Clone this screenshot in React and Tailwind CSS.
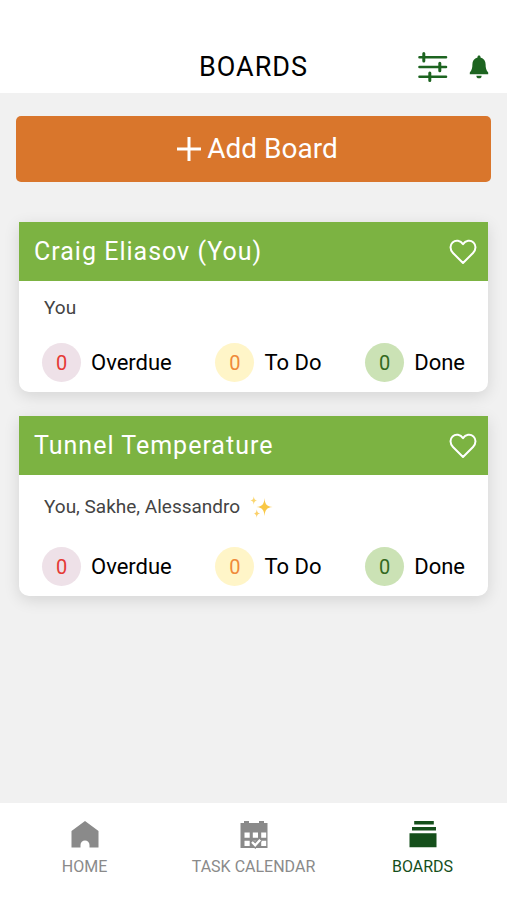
import React, {useState} from "react";

const boards = [
    {id: 1, name: "Craig Eliasov (You)", members: "You", starred: false, overdue: 0, todo: 0, done: 0},
    {id: 2, name: "Tunnel Temperature", members: "You, Sakhe, Alessandro", starred: true, overdue: 0, todo: 0, done: 0},
];

function FilterIcon() {
    return (
        <svg width="30" height="30" viewBox="0 0 30 30" fill="none" stroke="#1d6420" strokeWidth="2.6" strokeLinecap="round" aria-hidden="true">
            <path d="M1.500 5.200h26.500M1.500 15h26.500M1.500 24.800h26.500"/>
            <path d="M5.800 1.500v7.400M21.800 11.300v7.400M11.800 21.100v7.400" strokeWidth="3"/>
        </svg>
    );
}

function BellIcon() {
    return (
        <svg width="20" height="24" viewBox="0 0 20 24" fill="#1d6420" aria-hidden="true">
            <path d="M10 .5c1 0 1.500.7 1.500 1.600v.3c3.400.8 5.100 3.600 5.100 6.800 0 3.600.5 5.800 2.600 8.300v1.800H.8v-1.800c2.100-2.500 2.600-4.700 2.600-8.300 0-3.200 1.700-6 5.100-6.800v-.3C8.500 1.200 9 .5 10 .5z"/>
            <path d="M7.400 20.700h5.200a2.600 2.600 0 0 1-5.200 0z"/>
        </svg>
    );
}

function PlusIcon() {
    return (
        <svg width="24" height="24" viewBox="0 0 24 24" fill="none" stroke="currentColor" strokeWidth="3" aria-hidden="true">
            <path d="M12 0v24M0 12h24"/>
        </svg>
    );
}

function HeartIcon() {
    return (
        <svg width="28" height="26" viewBox="0 0 28 26" fill="none" stroke="currentColor" strokeWidth="2" strokeLinejoin="round" aria-hidden="true">
            <path d="M14 24 4 14C.6 10.500.9 6 3.600 3.400c3-2.700 7.900-2 10.400 1.700 2.500-3.700 7.400-4.400 10.400-1.700 2.700 2.600 3 7.100-.4 10.600z"/>
        </svg>
    );
}

function SparklesIcon() {
    return (
        <svg className="h-[34px] w-[23px]" viewBox="0 0 23 23" role="img" aria-label="Sparkles">
            <path fill="#f9c846" d="M14.500 2.500c.5 6.300 2.200 8.400 8.200 9-6 .6-7.700 2.700-8.200 9-.5-6.300-2.200-8.400-8.200-9 6-.6 7.700-2.700 8.200-9z"/>
            <path fill="#fbd66e" d="M3.800.8c.4 3 1 3.700 3.400 4.200-2.400.5-3 1.200-3.400 4.200C3.400 6.200 2.800 5.500.4 5c2.400-.5 3-1.200 3.400-4.200z"/>
            <path fill="#fbd06a" d="M6.800 13.800c.4 3 .9 3.800 3.300 4.300-2.400.5-2.900 1.300-3.300 4.300-.4-3-.9-3.800-3.300-4.300 2.400-.5 2.900-1.300 3.300-4.300z"/>
        </svg>
    );
}

function HomeIcon() {
    return (
        <svg width="28" height="28" viewBox="0 0 28 28" fill="currentColor" aria-hidden="true">
            <path d="M14 0 27.500 10V26.500H18.500v-2.500a4.500 4.500 0 0 0-9 0v2.500H.5V10z"/>
        </svg>
    );
}

function CalendarIcon() {
    return (
        <svg width="28" height="28" viewBox="0 0 28 28" aria-hidden="true">
            <path fill="currentColor" d="M.5 2H4V0h5v2h10V0h5v2h3.500v25H.5z"/>
            <path fill="#fff" d="M4.500 11.500h5.200v5.200H4.500zM12.800 11.500H18v5.200h-5.200zM21.200 11.500h5v5.200h-5zM4.500 19.700h5.200v5.200H4.500zM21.200 19.700h5v5.200h-5zM12.800 19.700H18v5.200h-5.200z"/>
            <path fill="none" stroke="currentColor" strokeWidth="5" d="m12 21 3.200 3.200 4.800-5.700"/>
            <path fill="none" stroke="#fff" strokeWidth="2.400" d="m12 21 3.200 3.200 5-5.400"/>
        </svg>
    );
}

function BoardsIcon() {
    return (
        <svg width="28" height="28" viewBox="0 0 28 28" fill="currentColor" aria-hidden="true">
            <path d="M5.200 0h19.600v3.500H5.200zM3 6h24v3.500H3zM.5 12.300h27v14H.5z"/>
        </svg>
    );
}

function Stat({count, label, badgeClass}) {
    return (
        <li className="flex items-center gap-[10px]">
            <span className={`flex size-[39px] items-center justify-center rounded-full text-[20px] ${badgeClass}`}>
                {count}
            </span>
            <span className="text-[22px] leading-7 text-black">{label}</span>
        </li>
    );
}

function BoardCard({board}) {
    const [liked, setLiked] = useState(false);

    return (
        <article className="rounded-b-[10px] bg-white shadow-[0_4px_16px_rgba(0,0,0,0.12)]">
            {/* Card header */}
            <div className="flex h-[59px] items-center justify-between bg-[#7cb342] pr-[11px] pl-[15px] text-white">
                <h2 className="text-[25px] leading-8 tracking-[1px]">{board.name}</h2>
                <button
                    type="button"
                    aria-label="Favourite"
                    aria-pressed={liked}
                    onClick={() => setLiked(!liked)}
                >
                    <HeartIcon/>
                </button>
            </div>
            <div className="px-[23px] pt-[15px] pb-[10px]">
                <p className="mb-[23px] flex min-h-6 items-center gap-[10px] pl-[2px] text-[19px] leading-6 text-[#444]">
                    {board.members}
                    {board.starred && <SparklesIcon/>}
                </p>
                <ul className="flex justify-between">
                    <Stat count={board.overdue} label="Overdue" badgeClass="bg-[#eee1e8] text-[#e53935]"/>
                    <Stat count={board.todo} label="To Do" badgeClass="bg-[#fff5c8] text-[#ef8a3a]"/>
                    <Stat count={board.done} label="Done" badgeClass="bg-[#cbe2b5] text-[#33691e]"/>
                </ul>
            </div>
        </article>
    );
}

export default function App() {
    return (
        <div className="flex min-h-screen flex-col bg-[#f1f1f1] font-[Roboto,sans-serif]">
            {/* Top bar */}
            <header className="grid grid-cols-[1fr_auto_1fr] items-center bg-white px-[18px] pt-[50px] pb-[9px]">
                <h1 className="col-start-2 text-[27px] leading-[34px] tracking-[1px] text-black">BOARDS</h1>
                <div className="flex items-center justify-end gap-[21px]">
                    <button type="button" aria-label="Filter"><FilterIcon/></button>
                    <button type="button" aria-label="Notifications"><BellIcon/></button>
                </div>
            </header>

            <main className="flex-1 px-4 pt-[23px] pb-6">
                <button
                    type="button"
                    className="flex h-[66px] w-full items-center justify-center gap-[6px] rounded-[5px] bg-[#d9762c] pl-2 text-[28px] text-white"
                >
                    <PlusIcon/>
                    Add Board
                </button>

                <div className="mt-10 flex flex-col gap-6 px-[3px]">
                    {boards.map((board) => (
                        <BoardCard key={board.id} board={board}/>
                    ))}
                </div>
            </main>

            {/* Bottom navigation */}
            <nav className="grid grid-cols-3 bg-white pt-[18px] pb-[23px] text-[16px] leading-5 text-[#8a8a8a]">
                <a href="#home" className="flex flex-col items-center gap-2">
                    <HomeIcon/>
                    HOME
                </a>
                <a href="#calendar" className="flex flex-col items-center gap-2">
                    <CalendarIcon/>
                    TASK CALENDAR
                </a>
                <a href="#boards" aria-current="page" className="flex flex-col items-center gap-2 text-[#154f1b]">
                    <BoardsIcon/>
                    BOARDS
                </a>
            </nav>
        </div>
    );
}
